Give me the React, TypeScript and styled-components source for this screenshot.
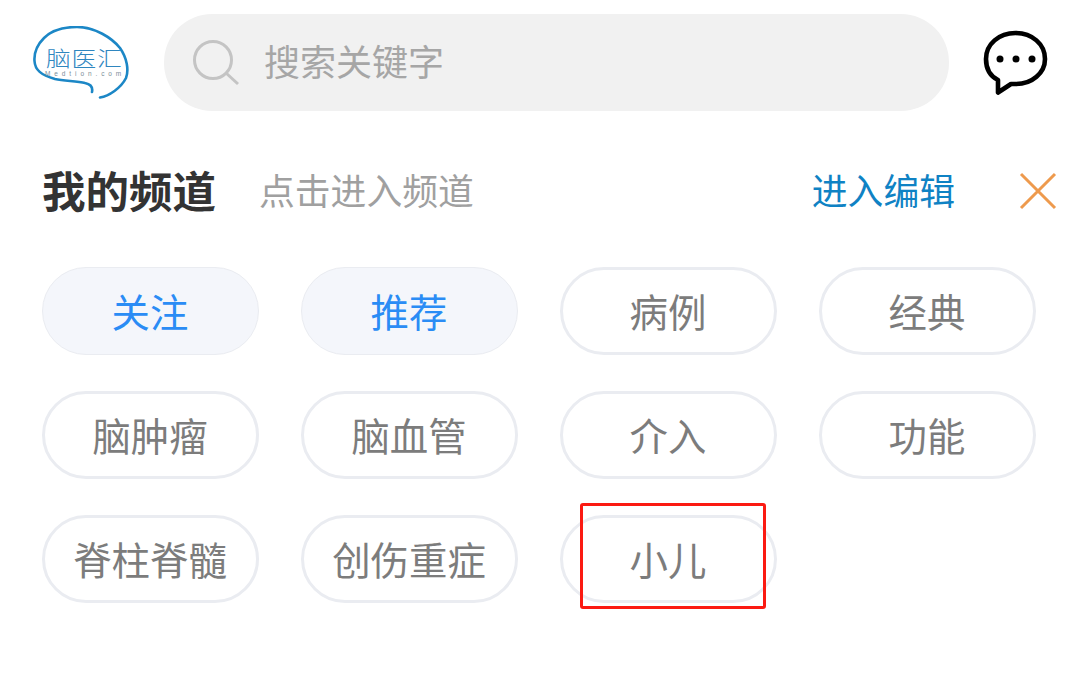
import React from 'react';
import styled, { createGlobalStyle } from 'styled-components';

const GlobalStyle = createGlobalStyle`
	html, body {
		margin: 0;
		padding: 0;
		background: #fff;
	}
	body {
		font-family: "Noto Sans CJK SC", "Noto Sans", sans-serif;
	}
`;

const Page = styled.div`
	position: relative;
	width: 1077px;
	height: 696px;
	overflow: hidden;
	background: #fff;
	box-sizing: border-box;
	padding-top: 14px;
`;

const Header = styled.header`
	display: flex;
	align-items: center;
	height: 97px;
	padding-left: 33px;
`;

const Logo = styled.svg`
	width: 97px;
	height: 76px;
	flex-shrink: 0;
	margin-top: 2px;
`;

const SearchBar = styled.div`
	display: flex;
	align-items: center;
	width: 785px;
	height: 97px;
	margin-left: 34px;
	padding-left: 28px;
	box-sizing: border-box;
	border-radius: 48px;
	background: #f1f1f1;
`;

const SearchIcon = styled.svg`
	width: 48px;
	height: 46px;
	flex-shrink: 0;
`;

const SearchText = styled.span`
	margin-left: 24px;
	margin-bottom: 5px;
	font-size: 36px;
	line-height: 1;
	color: #a6a6a6;
`;

const ChatIcon = styled.svg`
	width: 66px;
	height: 66px;
	margin-left: 34px;
	flex-shrink: 0;
`;

const TitleRow = styled.div`
	display: flex;
	align-items: center;
	height: 60px;
	margin-top: 50px;
	padding-left: 42px;
`;

const Title = styled.h2`
	margin: 0 0 2px;
	font-size: 43.5px;
	font-weight: 700;
	line-height: 1;
	color: #333;
`;

const Hint = styled.span`
	margin: 0 0 2px 43px;
	font-size: 35.8px;
	line-height: 1;
	color: #a0a0a0;
`;

const EditLink = styled.a`
	margin: 0 0 2px auto;
	font-size: 35.8px;
	line-height: 1;
	color: #0f82c4;
`;

const CloseIcon = styled.svg`
	width: 38px;
	height: 38px;
	margin-left: 64px;
	margin-right: 20px;
	flex-shrink: 0;
`;

const ChannelGrid = styled.div`
	display: grid;
	grid-template-columns: repeat(4, 217px);
	grid-auto-rows: 88px;
	column-gap: 42px;
	row-gap: 36px;
	margin-top: 46px;
	padding-left: 42px;
`;

const Chip = styled.div<{ $active?: boolean }>`
	display: flex;
	align-items: center;
	justify-content: center;
	box-sizing: border-box;
	padding: 0 1px 2px 0;
	border-radius: 44px;
	border: ${(p) => (p.$active ? '1px solid #eaecf1' : '3px solid #eaecf1')};
	background: ${(p) => (p.$active ? '#f4f6fb' : '#fff')};
	color: ${(p) => (p.$active ? '#2a8cf5' : '#7c7c7c')};
	font-size: 38.4px;
	line-height: 1;
	white-space: nowrap;
`;

const Highlight = styled.div`
	position: absolute;
	left: 580px;
	top: 503px;
	width: 186px;
	height: 106px;
	box-sizing: border-box;
	border: 3px solid #fb1a12;
	border-radius: 3px;
`;

const channels = [
	{ name: '关注', active: true },
	{ name: '推荐', active: true },
	{ name: '病例' },
	{ name: '经典' },
	{ name: '脑肿瘤' },
	{ name: '脑血管' },
	{ name: '介入' },
	{ name: '功能' },
	{ name: '脊柱脊髓' },
	{ name: '创伤重症' },
	{ name: '小儿' },
];

export default function App() {
	return (
		<Page>
			<GlobalStyle />
			<Header>
				<Logo viewBox="0 0 97 76">
					{/* brush ring of the logo, open at the tail */}
					<path
						d="M67 71.5 C76 70 88 62 93 52 C96 44 94 32 87 22 C79 12 62 1 44 1 C32 1 20 3 11 12 C4 19 1 28 1.5 35 C2 44 8 49 22 53 C32 55 44 55 52 57 C57 58 60 61 59 66"
						fill="none"
						stroke="#1c87c6"
						strokeWidth="2.6"
						strokeLinecap="round"
					/>
					{/* the wordmark is wider than the font, so stretch it sideways */}
					<text transform="translate(13 39.5) scale(1.18 1)" fontSize="21" letterSpacing="0.6" fill="#2f86bf" fontFamily="Noto Sans CJK SC" fontWeight="300">脑医汇</text>
					<text x="12" y="49.5" fontSize="6.5" letterSpacing="3.9" fill="#7a8d99" fontFamily="Liberation Sans">Medtion.com</text>
				</Logo>
				<SearchBar>
					<SearchIcon viewBox="0 0 48 46">
						<circle cx="21" cy="20" r="18.5" fill="none" stroke="#c4c4c4" strokeWidth="3" />
						<path d="M34 33 L46 44" fill="none" stroke="#c4c4c4" strokeWidth="3" />
					</SearchIcon>
					<SearchText>搜索关键字</SearchText>
				</SearchBar>
				<ChatIcon viewBox="0 0 66 66">
					<path
						d="M32.5 3 C49 3 62 14 62 29 C62 43 49 54 33 54 L28 54 L15 62.5 L15 50 C7 46 3 38 3 29 C3 14 16 3 32.5 3 Z"
						fill="none"
						stroke="#000"
						strokeWidth="4.6"
						strokeLinejoin="round"
					/>
					<circle cx="17" cy="29" r="3.5" fill="#000" />
					<circle cx="33" cy="29" r="3.5" fill="#000" />
					<circle cx="49" cy="29" r="3.5" fill="#000" />
				</ChatIcon>
			</Header>
			<TitleRow>
				<Title>我的频道</Title>
				<Hint>点击进入频道</Hint>
				<EditLink>进入编辑</EditLink>
				<CloseIcon viewBox="0 0 38 38">
					<path d="M2 2 L36 36 M36 2 L2 36" fill="none" stroke="#ee9a4d" strokeWidth="3" />
				</CloseIcon>
			</TitleRow>
			<ChannelGrid>
				{channels.map((c) => (
					<Chip key={c.name} $active={c.active}>{c.name}</Chip>
				))}
			</ChannelGrid>
			<Highlight />
		</Page>
	);
}
